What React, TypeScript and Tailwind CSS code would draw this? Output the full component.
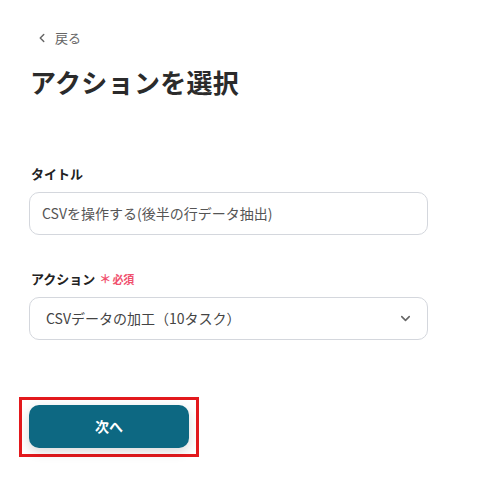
import { ChevronLeft, ChevronDown } from 'lucide-react'

export default function App() {
  return (
    <div
      className="min-h-screen bg-white px-[29px] pt-[29px] text-[#333]"
      style={{ fontFamily: '"Noto Sans CJK JP", "Noto Sans", sans-serif' }}
    >
      {/* Back link */}
      <div className="flex items-center gap-[6px] text-[13px] leading-[18px] text-[#666] ml-[6px]">
        <ChevronLeft size={14} strokeWidth={2.5} />
        <span>戻る</span>
      </div>

      <h1 className="mt-[17px] text-[26px] leading-[36px] font-bold tracking-[0.3px] text-[#2b2b2b] ml-[1px]">
        アクションを選択
      </h1>

      {/* Title field */}
      <div className="mt-[65px]">
        <div className="text-[13px] leading-[18px] font-bold text-[#222] ml-[2px]">タイトル</div>
        <div className="mt-[9px] w-[399px] h-[43px] rounded-[10px] border border-[#d4d7dd] flex items-center px-[12px] text-[14px] text-[#555]">
          CSVを操作する(後半の行データ抽出)
        </div>
      </div>

      {/* Action field */}
      <div className="mt-[35px]">
        <div className="flex items-center gap-[4px] text-[13px] leading-[18px] font-bold text-[#222] ml-[2px]">
          <span>アクション</span>
          <span className="text-[#f0506e] text-[12px]">＊</span>
          <span className="text-[#f0506e] text-[11px] -ml-[3px]">必須</span>
        </div>
        <div className="mt-[9px] w-[399px] h-[43px] rounded-[10px] border border-[#d4d7dd] flex items-center justify-between pl-[16px] pr-[14px] text-[14px] text-[#444]">
          <span>CSVデータの加工（10タスク）</span>
          <ChevronDown size={15} strokeWidth={2.5} className="text-[#666]" />
        </div>
      </div>

      {/* Next button with highlight */}
      <div className="mt-[57px] -ml-[10px] w-[180px] border-[3px] border-[#e3191d] pl-[7px] pt-[5px] pb-[6px]">
        <button className="w-[160px] h-[43px] rounded-[10px] bg-[#0d6882] text-white text-[14px] font-bold shadow-[0_4px_12px_rgba(0,0,0,0.15)]">
          次へ
        </button>
      </div>
    </div>
  )
}
